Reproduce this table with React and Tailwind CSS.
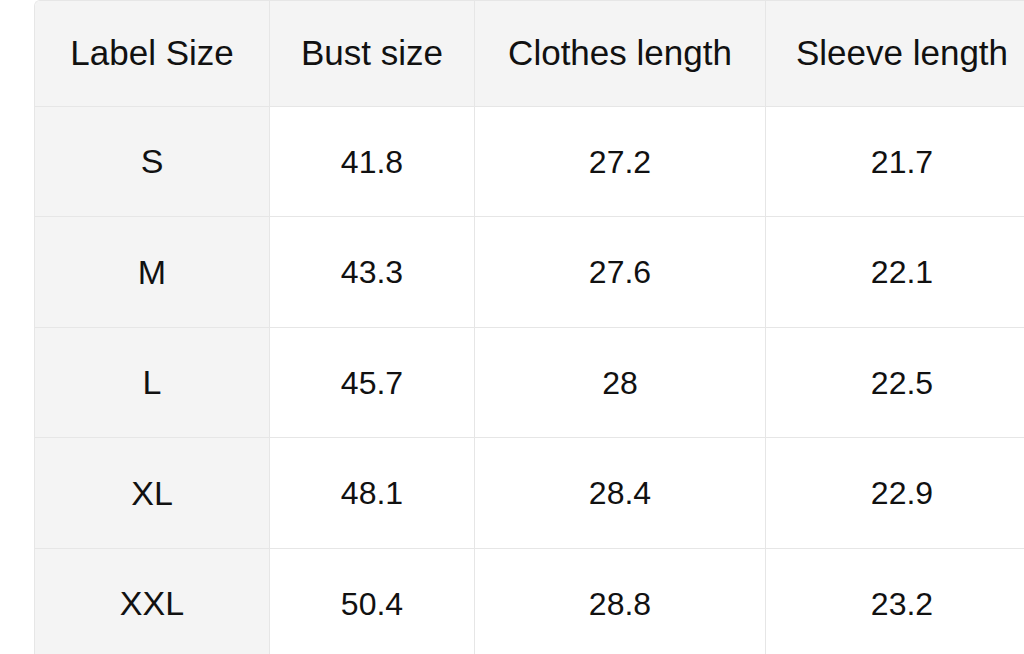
import React from "react";

const headers = ["Label Size", "Bust size", "Clothes length", "Sleeve length"];

const rows = [
  ["S", "41.8", "27.2", "21.7"],
  ["M", "43.3", "27.6", "22.1"],
  ["L", "45.7", "28", "22.5"],
  ["XL", "48.1", "28.4", "22.9"],
  ["XXL", "50.4", "28.8", "23.2"],
];

const rowHeights = ["h-[110px]", "h-[111px]", "h-[110px]", "h-[111px]", "h-[110px]"];

export default function App() {
  return (
    <div
      className="w-[1024px] h-[654px] overflow-hidden bg-white text-[#111]"
      style={{ fontFamily: '"Liberation Sans", Arial, sans-serif' }}
    >
      <div className="ml-[34px] w-[1004px] border-l border-t border-[#e6e6e6] rounded-tl-md overflow-hidden">
        <div className="grid grid-cols-[235px_205px_291px_273px] h-[106px] bg-[#f4f4f4]">
          {headers.map((h) => (
            <div
              key={h}
              className="flex items-center justify-center border-r border-b border-[#e6e6e6] text-[35px] pb-[1px]"
            >
              {h}
            </div>
          ))}
        </div>
        {rows.map((r, i) => (
          <div key={r[0]} className={`grid grid-cols-[235px_205px_291px_273px] ${rowHeights[i]}`}>
            {r.map((c, j) => (
              <div
                key={j}
                className={`flex items-center justify-center border-r border-b border-[#e6e6e6] ${
                  j === 0 ? "bg-[#f4f4f4] text-[34px]" : "bg-white text-[32px]"
                }`}
              >
                {c}
              </div>
            ))}
          </div>
        ))}
      </div>
    </div>
  );
}
